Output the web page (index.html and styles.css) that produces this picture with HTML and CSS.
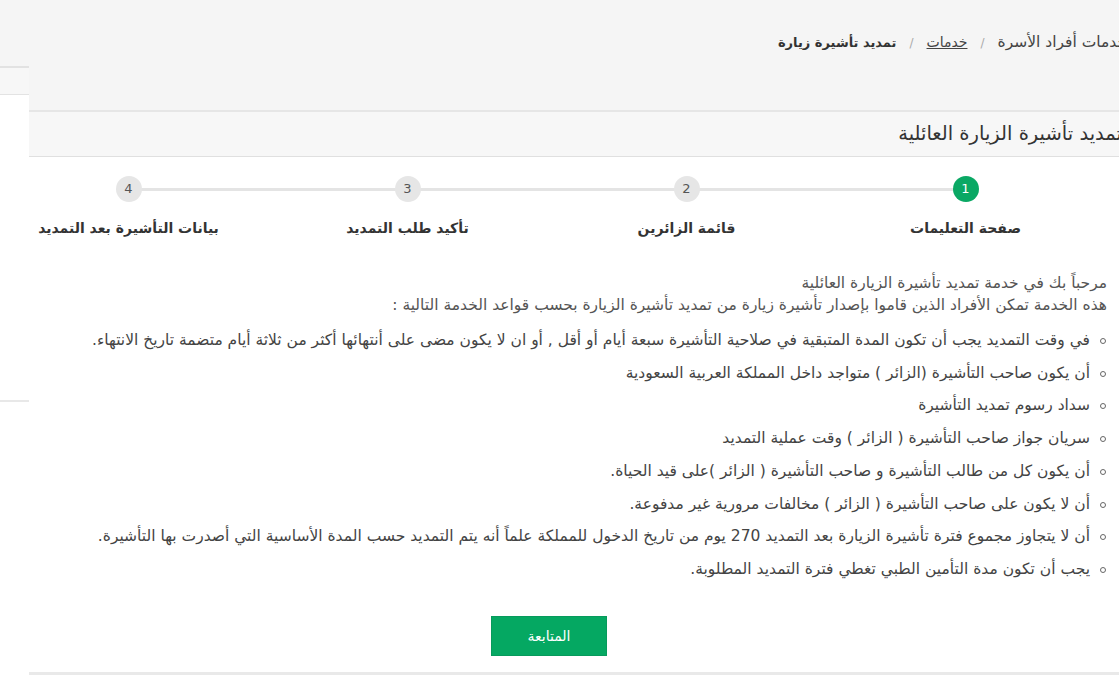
FILE: index.html
```html
<!DOCTYPE html>
<html lang="ar">
<head>
<meta charset="utf-8">
<title>تمديد تأشيرة الزيارة العائلية</title>
<link rel="stylesheet" href="styles.css">
</head>
<body>
<div class="page">
  <aside class="side">
    <div class="side-top"></div>
    <div class="side-sub"></div>
    <div class="side-body"></div>
  </aside>
  <main class="main" dir="rtl">
    <div class="crumbs-band">
      <nav class="crumbs">
        <span class="crumb-home">خدمات أفراد الأسرة</span>
        <span class="sep">/</span>
        <a class="crumb-link" href="#">خدمات</a>
        <span class="sep">/</span>
        <strong>تمديد تأشيرة زيارة</strong>
      </nav>
    </div>
    <div class="title-band"><h1 class="title">تمديد تأشيرة الزيارة العائلية</h1></div>
    <div class="steps-wrap">
      <ol class="steps">
        <li class="step active"><span class="num">1</span><span class="label">صفحة التعليمات</span></li>
        <li class="step"><span class="num">2</span><span class="label">قائمة الزائرين</span></li>
        <li class="step"><span class="num">3</span><span class="label">تأكيد طلب التمديد</span></li>
        <li class="step"><span class="num">4</span><span class="label">بيانات التأشيرة بعد التمديد</span></li>
      </ol>
    </div>
    <div class="content">
      <p class="intro">مرحباً بك في خدمة تمديد تأشيرة الزيارة العائلية<br>هذه الخدمة تمكن الأفراد الذين قاموا بإصدار تأشيرة زيارة من تمديد تأشيرة الزيارة بحسب قواعد الخدمة التالية :</p>
      <ul class="rules">
        <li>في وقت التمديد يجب أن تكون المدة المتبقية في صلاحية التأشيرة سبعة أيام أو أقل , أو ان لا يكون مضى على أنتهائها أكثر من ثلاثة أيام متضمة تاريخ الانتهاء.</li>
        <li>أن يكون صاحب التأشيرة (الزائر ) متواجد داخل المملكة العربية السعودية</li>
        <li>سداد رسوم تمديد التأشيرة</li>
        <li>سريان جواز صاحب التأشيرة ( الزائر ) وقت عملية التمديد</li>
        <li>أن يكون كل من طالب التأشيرة و صاحب التأشيرة ( الزائر )على قيد الحياة.</li>
        <li>أن لا يكون على صاحب التأشيرة ( الزائر ) مخالفات مرورية غير مدفوعة.</li>
        <li>أن لا يتجاوز مجموع فترة تأشيرة الزيارة بعد التمديد 270 يوم من تاريخ الدخول للمملكة علماً أنه يتم التمديد حسب المدة الأساسية التي أصدرت بها التأشيرة.</li>
        <li>يجب أن تكون مدة التأمين الطبي تغطي فترة التمديد المطلوبة.</li>
      </ul>
      <div class="actions"><button class="btn" type="button">المتابعة</button></div>
    </div>
    <div class="foot-line"></div>
  </main>
</div>
</body>
</html>
```
FILE: styles.css
```css
html, body {
  margin: 0;
  padding: 0;
  overflow: hidden;
}
body {
  width: 1119px;
  height: 690px;
  background: #ffffff;
  font-family: "DejaVu Sans", "Noto Sans", sans-serif;
  color: #444;
}
.page {
  display: flex;
  direction: ltr;
  width: 1135px;
}
.side {
  width: 29px;
  flex: none;
}
.side-top {
  height: 66px;
  background: #f5f5f5;
  border-bottom: 2px solid #e2e2e2;
}
.side-sub {
  height: 26px;
  background: #f7f7f7;
  border-bottom: 1px solid #e3e3e3;
}
.side-body {
  height: 305px;
  border-bottom: 2px solid #e8e8e8;
}
.main {
  width: 1106px;
  flex: none;
  direction: rtl;
}
.crumbs-band {
  height: 112px;
  box-sizing: border-box;
  background: #f5f5f5;
  border-bottom: 2px solid #e6e6e6;
  padding: 32px 8px 0 0;
}
.crumbs {
  display: flex;
  align-items: baseline;
  gap: 13px;
  font-size: 14px;
  line-height: 20px;
  color: #444;
  white-space: nowrap;
}
.crumb-home {
  font-size: 15.5px;
}
.crumbs .sep {
  color: #aaa;
  font-size: 12px;
}
.crumb-link {
  color: #444;
  text-decoration: underline;
}
.crumbs strong {
  color: #333;
  font-size: 13px;
}
.title-band {
  height: 44px;
  background: #f7f7f7;
  border-bottom: 1px solid #e0e0e0;
  padding-right: 13px;
  white-space: nowrap;
}
.title {
  margin: 0;
  font-size: 19.5px;
  font-weight: normal;
  line-height: 44px;
  color: #333;
}
.steps-wrap {
  padding-top: 19px;
  margin-right: 30px;
}
.steps {
  list-style: none;
  margin: 0;
  padding: 0;
  width: 1116px;
  display: grid;
  grid-template-columns: repeat(4, 279px);
}
.step {
  position: relative;
  display: flex;
  flex-direction: column;
  align-items: center;
}
.step:not(:last-child)::after {
  content: "";
  position: absolute;
  top: 12px;
  right: 50%;
  width: 100%;
  height: 3px;
  background: #e4e4e4;
}
.num {
  position: relative;
  z-index: 1;
  width: 26px;
  height: 26px;
  border-radius: 50%;
  background: #e6e6e6;
  color: #555;
  font-size: 13px;
  line-height: 26px;
  text-align: center;
}
.step.active .num {
  background: #0aa864;
  color: #fff;
}
.label {
  margin-top: 16px;
  font-size: 14px;
  font-weight: bold;
  line-height: 20px;
  color: #333;
  white-space: nowrap;
}
.content {
  padding: 34px 28px 0 10px;
}
.intro {
  margin: 0;
  font-size: 15.5px;
  line-height: 22px;
  color: #555;
}
.rules {
  list-style: none;
  margin: 8px 0 0;
  padding: 0 17px 0 0;
}
.rules li {
  position: relative;
  padding: 6px 0;
  font-size: 15.5px;
  line-height: 20.7px;
  color: #444;
  white-space: nowrap;
}
.rules li::before {
  content: "";
  position: absolute;
  right: -16px;
  top: 14px;
  width: 4px;
  height: 4px;
  border: 1.5px solid #666;
  border-radius: 50%;
}
.actions {
  display: flex;
  justify-content: center;
  margin-top: 30px;
  padding-right: 48px;
}
.btn {
  width: 116px;
  height: 40px;
  background: #05a862;
  border: 1px solid #079a5c;
  border-radius: 0;
  color: #fff;
  font-family: "DejaVu Sans", sans-serif;
  font-size: 14px;
}
.foot-line {
  margin-top: 16px;
  height: 3px;
  background: #e9e9e9;
}
```
